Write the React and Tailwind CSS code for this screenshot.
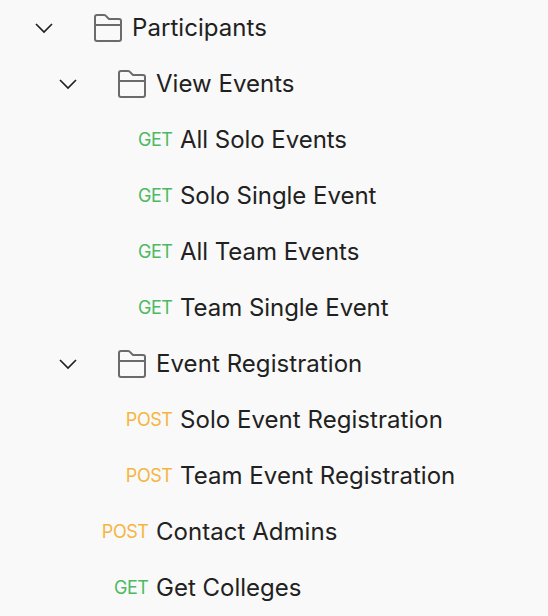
const rows = [
  { kind: "folder", label: "Participants", arrow: "w-[93px] pl-[35px]", tracking: "tracking-[0.06px]" },
  { kind: "folder", label: "View Events", arrow: "w-[117px] pl-[59px]", tracking: "tracking-[0.03px]" },
  { kind: "GET", label: "All Solo Events", pad: "w-[180px]", tracking: "tracking-[-0.04px]" },
  { kind: "GET", label: "Solo Single Event", pad: "w-[180px]", tracking: "tracking-[-0.03px]" },
  { kind: "GET", label: "All Team Events", pad: "w-[180px]", tracking: "tracking-[-0.04px]" },
  { kind: "GET", label: "Team Single Event", pad: "w-[180px]", tracking: "tracking-[-0.04px]" },
  { kind: "folder", label: "Event Registration", arrow: "w-[117px] pl-[59px]", tracking: "tracking-[0.07px]" },
  { kind: "POST", label: "Solo Event Registration", pad: "w-[180px]", tracking: "tracking-[0.05px]" },
  { kind: "POST", label: "Team Event Registration", pad: "w-[180px]", tracking: "tracking-[0.05px]" },
  { kind: "POST", label: "Contact Admins", pad: "w-[156px]", tracking: "tracking-[0.04px]" },
  { kind: "GET", label: "Get Colleges", pad: "w-[156px]", tracking: "tracking-normal" },
];

function Chevron() {
  return (
    <svg width="18" height="12" viewBox="0 0 18 12" fill="none" stroke="#212121" strokeWidth="1.7">
      <path d="M1 2 9 10 17 2" />
    </svg>
  );
}

function Folder() {
  return (
    <svg className="shrink-0" width="30" height="30" viewBox="0 0 30 30" fill="none" stroke="#6b6b6b" strokeWidth="2" strokeLinejoin="round">
      <path d="M2 26V4a2 2 0 0 1 2-2h7.2a2 2 0 0 1 1.4.6L16 6h10a2 2 0 0 1 2 2v18a2 2 0 0 1-2 2H4a2 2 0 0 1-2-2ZM2 12h26" />
    </svg>
  );
}

function Row({ row }) {
  return (
    <li className="flex h-14 items-center">
      {row.kind === "folder" ? (
        <>
          <span className={`shrink-0 ${row.arrow}`}><Chevron /></span>
          <Folder />
          <span className={`ml-[9px] ${row.tracking}`}>{row.label}</span>
        </>
      ) : (
        <>
          <span className={`shrink-0 pb-0.5 pr-[7.5px] text-right text-[18px] tracking-[-0.45px] ${row.pad} ${row.kind === "GET" ? "text-[#4cb961]" : "text-[#f5b53f]"}`}>{row.kind}</span>
          <span className={row.tracking}>{row.label}</span>
        </>
      )}
    </li>
  );
}

export default function App() {
  return (
    <main className="h-[616px] w-[548px] overflow-hidden bg-[#f9f9f9] font-['Inter',sans-serif] text-[24px] text-[#212121]">
      <ul className="whitespace-nowrap">
        {rows.map((row) => <Row key={row.label} row={row} />)}
      </ul>
    </main>
  );
}
